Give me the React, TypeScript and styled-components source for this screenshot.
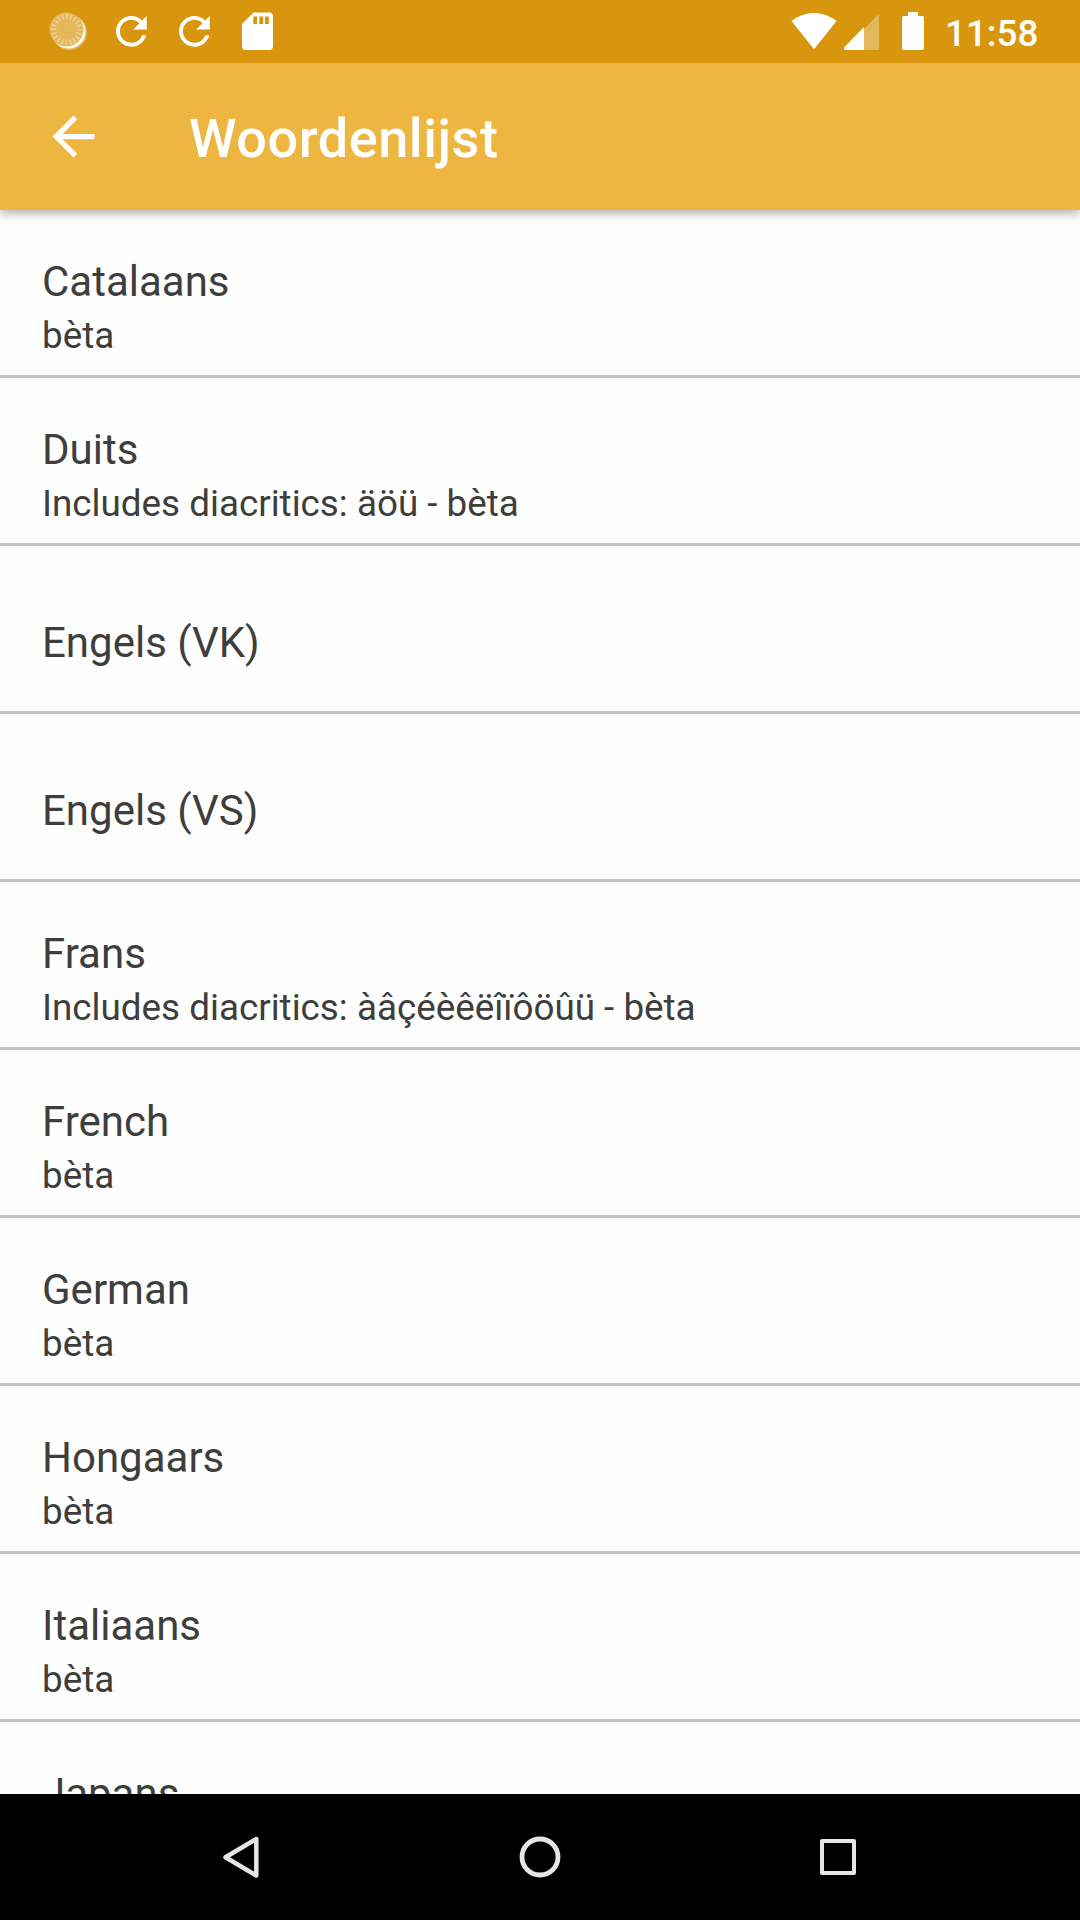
import React from "react";
import styled, { createGlobalStyle } from "styled-components";

const GlobalStyle = createGlobalStyle`
  * { box-sizing: border-box; }
  body { margin: 0; background: #fefefe; font-family: Roboto, "Noto Sans", sans-serif; }
`;

const Screen = styled.div`
  width: 1080px;
  height: 1920px;
  display: flex;
  flex-direction: column;
  overflow: hidden;
  background: #fefefe;
`;

const StatusBar = styled.header`
  height: 63px;
  flex: none;
  display: flex;
  justify-content: space-between;
  align-items: flex-start;
  padding: 0 42px 0 42px;
  background: #d8960f;
`;

const StatusIcons = styled.svg`
  display: block;
  width: 252px;
  height: 63px;
`;

const StatusRight = styled.div`
  display: flex;
`;

const SignalIcons = styled.svg`
  display: block;
  width: 160px;
  height: 63px;
`;

const Clock = styled.span`
  width: 93px;
  white-space: nowrap;
  font-size: 36.8px;
  font-weight: 500;
  line-height: 43px;
  padding-top: 12px;
  color: #fff;
`;

const AppBar = styled.nav`
  height: 147px;
  flex: none;
  display: flex;
  align-items: center;
  padding: 0 42px;
  gap: 84px;
  background: #edb641;
  box-shadow: 0 3px 10px rgba(0, 0, 0, 0.35);
  clip-path: inset(0 0 -20px 0);
  z-index: 1;
`;

const BackIcon = styled.svg`
  display: block;
  width: 63px;
  height: 63px;
  fill: #fff;
`;

const Title = styled.h1`
  margin: 0;
  padding-top: 4px;
  font-size: 54px;
  line-height: 64px;
  font-weight: 500;
  letter-spacing: 0.55px;
  color: #fff;
`;

const List = styled.ul`
  flex: 1;
  min-height: 0;
  margin: 0;
  padding: 0;
  list-style: none;
  overflow: hidden;
`;

const Item = styled.li<{ $single: boolean }>`
  height: 168px;
  padding: ${(p) => (p.$single ? 72 : 47)}px 42px 0;
  border-bottom: 3px solid #c4c4c4;
  color: #3e3e3c;
`;

const Name = styled.div`
  font-size: 42px;
  line-height: 49px;
`;

const Note = styled.div`
  padding-top: 8px;
  font-size: 36.8px;
  line-height: 43px;
`;

const NavBar = styled.footer`
  height: 126px;
  flex: none;
  display: flex;
  align-items: center;
  justify-content: center;
  gap: 238px;
  background: #000;
`;

const NavIcon = styled.svg`
  display: block;
  width: 60px;
  height: 60px;
  fill: none;
  stroke: #e6e6e6;
  stroke-linejoin: round;
`;

const REFRESH =
  "M17.65 6.35C16.2 4.9 14.21 4 12 4c-4.42 0-7.99 3.58-7.99 8s3.57 8 7.99 8c3.73 0 6.84-2.55 7.73-6h-2.08c-.82 2.33-3.04 4-5.65 4-3.31 0-6-2.69-6-6s2.69-6 6-6c1.66 0 3.14.69 4.22 1.78L13 11h7V4l-2.35 2.35z";

const languages: { name: string; note?: string }[] = [
  { name: "Catalaans", note: "bèta" },
  { name: "Duits", note: "Includes diacritics: äöü - bèta" },
  { name: "Engels (VK)" },
  { name: "Engels (VS)" },
  { name: "Frans", note: "Includes diacritics: àâçéèêëîïôöûü - bèta" },
  { name: "French", note: "bèta" },
  { name: "German", note: "bèta" },
  { name: "Hongaars", note: "bèta" },
  { name: "Italiaans", note: "bèta" },
  { name: "Japans", note: "bèta" },
];

export default function App() {
  return (
    <Screen>
      <GlobalStyle />
      <StatusBar>
        <StatusIcons viewBox="42 0 252 63">
          <circle cx="69.500" cy="32.500" r="17.500" fill="#e3b85f" />
          <circle cx="68.500" cy="31.500" r="17" fill="#fff" />
          <circle cx="66.500" cy="29.500" r="17" fill="#e4b75b" />
          <circle
            cx="66.500"
            cy="29.500"
            r="13"
            fill="none"
            stroke="#eccf93"
            strokeWidth="5.500"
            strokeDasharray="1.8 2.284"
            strokeDashoffset="0.9"
          />
          <path transform="translate(108.4 8.3) scale(1.917)" d={REFRESH} fill="#fff" />
          <path transform="translate(171.4 8.3) scale(1.917)" d={REFRESH} fill="#fff" />
          <path
            fill="#fff"
            fillRule="evenodd"
            d="M253.5 12.5H269a4 4 0 0 1 4 4V46a4 4 0 0 1-4 4H246a4 4 0 0 1-4-4V24zM253.3 16.5v7.5h3.8v-7.5zM259.3 16.5v7.5h3.8v-7.5zM265 16.5v7.5h3.8v-7.5z"
          />
        </StatusIcons>
        <StatusRight>
          <SignalIcons viewBox="785 0 160 63">
            <path d="M791.5 21Q802 13 814 13T836.5 21L815 48Q814 49.5 813 48Z" fill="#fff" />
            <path d="M844 50L877 15.5Q879 14 879 16.5V48Q879 50 877 50Z" fill="#e3b85b" />
            <path d="M864 27V50H845.5Q843 49.5 844.5 47Z" fill="#fff" />
            <path d="M908 12h10v4h4q2 0 2 2v30q0 2-2 2h-18q-2 0-2-2V18q0-2 2-2h4z" fill="#fff" />
          </SignalIcons>
          <Clock>11:58</Clock>
        </StatusRight>
      </StatusBar>
      <AppBar>
        <BackIcon viewBox="0 0 24 24">
          <path d="M20 11H7.83l5.59-5.59L12 4l-8 8 8 8 1.41-1.41L7.83 13H20v-2z" />
        </BackIcon>
        <Title>Woordenlijst</Title>
      </AppBar>
      <List>
        {languages.map(({ name, note }) => (
          <Item key={name} $single={!note}>
            <Name>{name}</Name>
            {note && <Note>{note}</Note>}
          </Item>
        ))}
      </List>
      <NavBar>
        <NavIcon viewBox="212 1827 60 60">
          <path d="M225.5 1857.3L256.3 1839V1875.5Z" strokeWidth="4.5" />
        </NavIcon>
        <NavIcon viewBox="510 1827 60 60">
          <circle cx="540" cy="1857" r="18" strokeWidth="4.8" />
        </NavIcon>
        <NavIcon viewBox="808 1827 60 60">
          <rect x="822" y="1841" width="32" height="32" strokeWidth="4" />
        </NavIcon>
      </NavBar>
    </Screen>
  );
}
